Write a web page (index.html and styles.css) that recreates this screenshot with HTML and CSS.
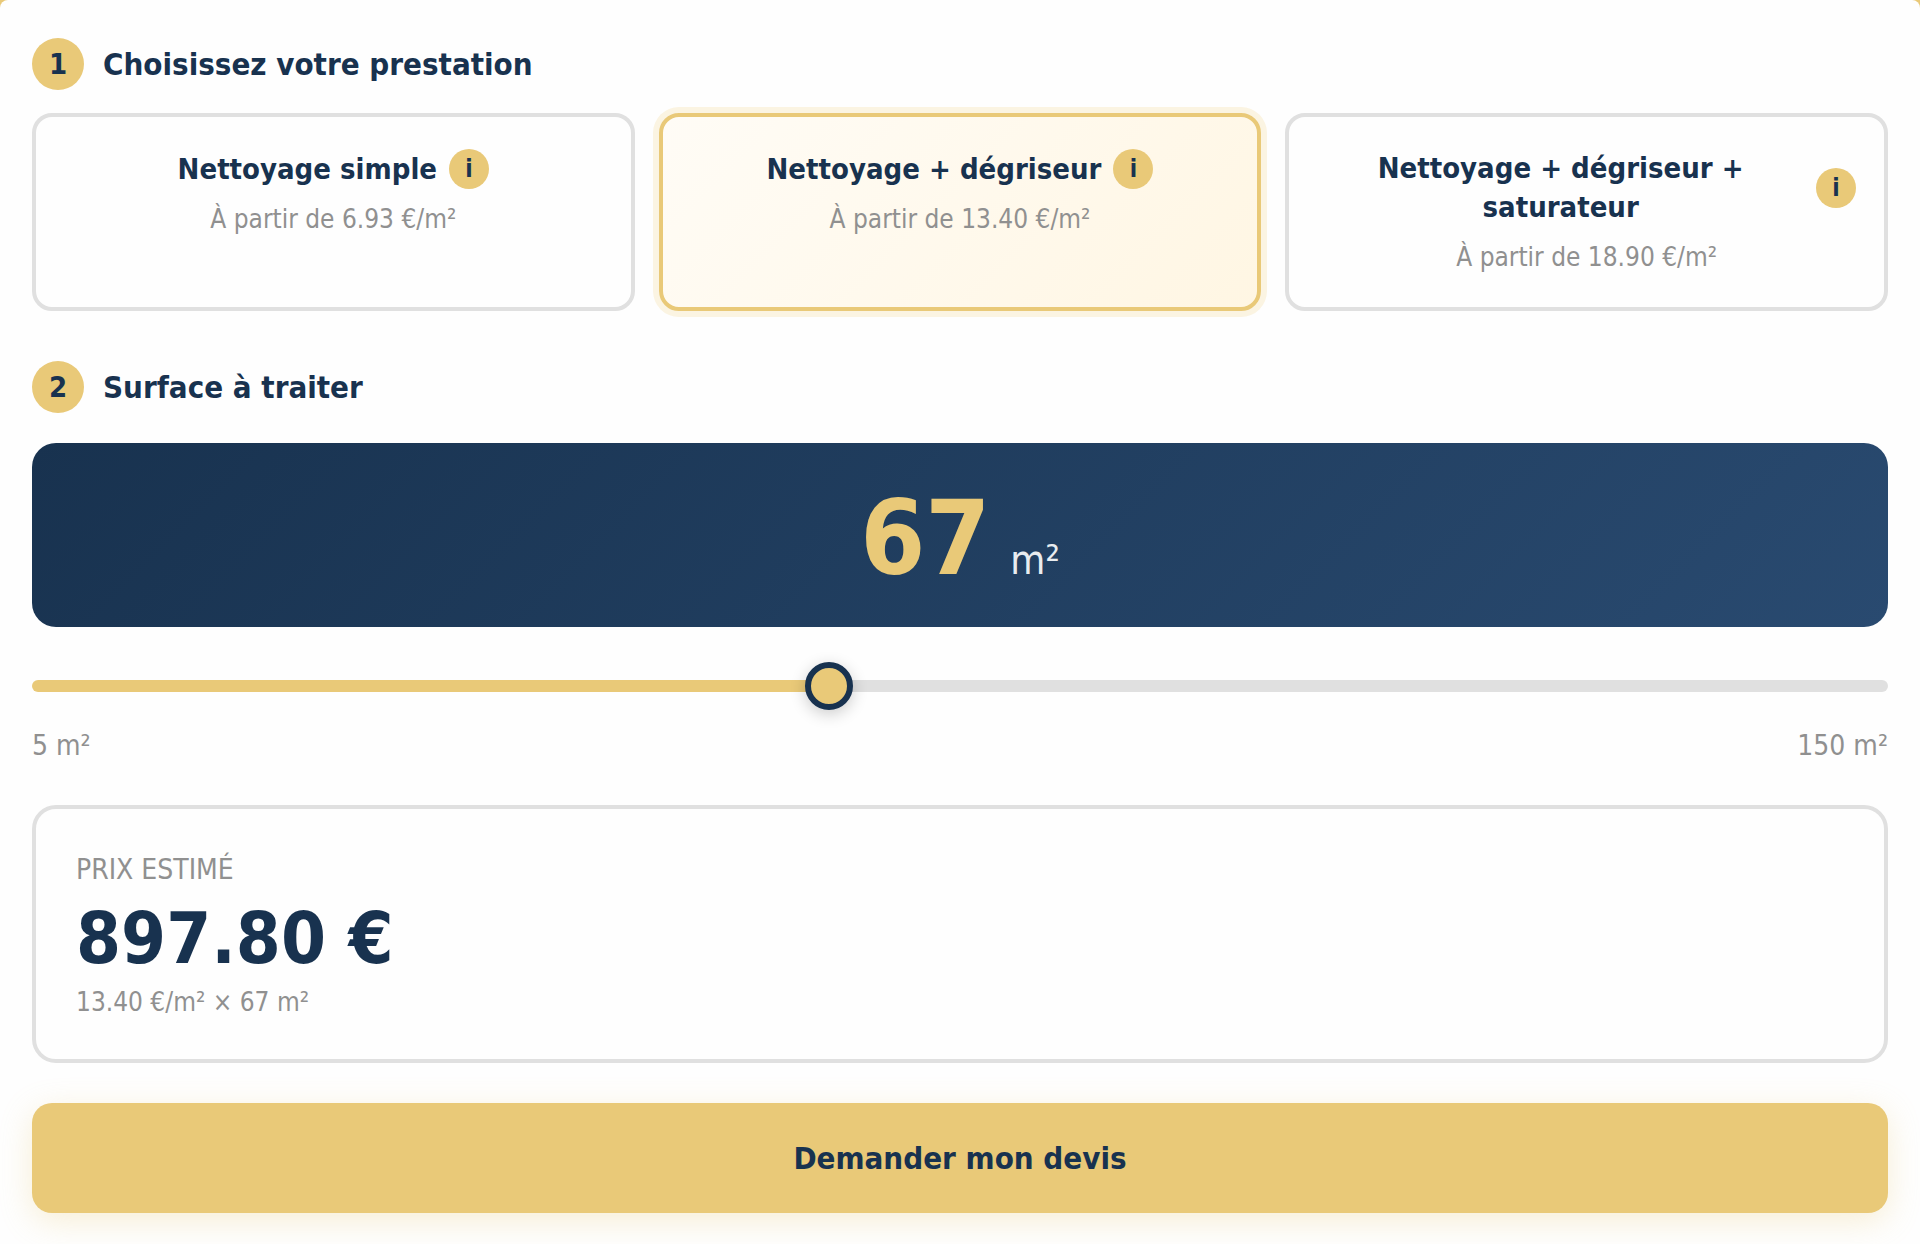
FILE: index.html
```
<!doctype html>
<html lang="fr">
<head>
    <meta charset="UTF-8" />
    <meta name="viewport" content="width=device-width, initial-scale=1.0" />
    <title>Estimation de devis</title>
    <link rel="stylesheet" href="styles.css">
</head>
<body>
    <main class="calculator">
        <section class="step">
            <h2 class="step-title"><span class="step-number">1</span>Choisissez votre prestation</h2>

            <div class="services">
                <div class="service-card">
                    <input type="radio" name="service" id="service-simple" class="service-radio" value="6.93" />
                    <div class="service-header">
                        <label for="service-simple" class="service-name">Nettoyage simple</label>
                        <button type="button" class="info-btn" aria-label="Informations nettoyage simple">i</button>
                    </div>
                    <p class="service-price">À partir de 6.93 €/m²</p>
                </div>
                <div class="service-card">
                    <input type="radio" name="service" id="service-degriseur" class="service-radio" value="13.40" checked />
                    <div class="service-header">
                        <label for="service-degriseur" class="service-name">Nettoyage + dégriseur</label>
                        <button type="button" class="info-btn" aria-label="Informations dégriseur">i</button>
                    </div>
                    <p class="service-price">À partir de 13.40 €/m²</p>
                </div>
                <div class="service-card">
                    <input type="radio" name="service" id="service-saturateur" class="service-radio" value="18.90" />
                    <div class="service-header">
                        <label for="service-saturateur" class="service-name">Nettoyage + dégriseur + saturateur</label>
                        <button type="button" class="info-btn" aria-label="Informations saturateur">i</button>
                    </div>
                    <p class="service-price">À partir de 18.90 €/m²</p>
                </div>
            </div>
        </section>

        <section class="step">
            <h2 class="step-title"><span class="step-number">2</span><label for="surface">Surface à traiter</label></h2>

            <div class="surface-display">
                <span class="surface-value" id="surfaceValue">67</span>
                <span class="surface-unit">m²</span>
            </div>

            <input type="range" id="surface" class="surface-slider" min="5" max="150" value="67" style="--fill: 42.76%;" />
            <div class="slider-labels">
                <span>5 m²</span>
                <span>150 m²</span>
            </div>
        </section>

        <section class="price-card">
            <p class="price-label">Prix estimé</p>
            <p class="price-total" id="priceTotal">897.80 €</p>
            <p class="price-detail" id="priceDetail">13.40 €/m² × 67 m²</p>
        </section>

        <button type="button" class="quote-btn">Demander mon devis</button>
    </main>

    <script>
        const slider = document.getElementById("surface");
        const radios = document.querySelectorAll(".service-radio");

        function updatePrice() {
            const rate = parseFloat(document.querySelector(".service-radio:checked").value);
            const surface = Number(slider.value);
            const fill = (surface - slider.min) / (slider.max - slider.min) * 100;

            slider.style.setProperty("--fill", fill.toFixed(2) + "%");
            document.getElementById("surfaceValue").textContent = surface;
            document.getElementById("priceTotal").textContent = (rate * surface).toFixed(2) + " €";
            document.getElementById("priceDetail").textContent = rate.toFixed(2) + " €/m² × " + surface + " m²";
        }

        slider.addEventListener("input", updatePrice);
        radios.forEach(radio => radio.addEventListener("change", updatePrice));
    </script>
</body>
</html>
```
FILE: styles.css
```
* {
    box-sizing: border-box;
}

body {
    margin: 0;
    background-color: #e9c978;
    color: #18324f;
    font-family: "DejaVu Sans Condensed", "Noto Sans", sans-serif;
}

p {
    margin: 0;
}

button {
    font-family: inherit;
    color: inherit;
    border: none;
    padding: 0;
    cursor: pointer;
}

.calculator {
    background-color: #fefefe;
    border-radius: 8px 8px 0 0;
    padding: 38px 32px 30px;
    min-height: 100vh;
}

/* Steps */
.step-title {
    display: flex;
    align-items: center;
    gap: 19px;
    margin: 0 0 23px;
    font-size: 31px;
    line-height: 40px;
    font-weight: 700;
}

.step-number {
    display: flex;
    align-items: center;
    justify-content: center;
    width: 52px;
    height: 52px;
    border-radius: 50%;
    background-color: #e9c978;
    font-size: 29px;
}

/* Services */
.services {
    display: grid;
    grid-template-columns: repeat(3, 1fr);
    gap: 24px;
    margin-bottom: 50px;
}

.service-card {
    position: relative;
    border: 4px solid #e0e0e0;
    border-radius: 20px;
    padding: 32px 28px;
    text-align: center;
}

.service-card:has(.service-radio:checked) {
    border-color: #e9c978;
    background: linear-gradient(135deg, #fffcf6 0%, #fff6e3 100%);
    box-shadow: 0 0 0 6px #fbf4e2;
}

.service-radio {
    position: absolute;
    inset: 0;
    width: 100%;
    height: 100%;
    margin: 0;
    opacity: 0;
    cursor: pointer;
}

.service-header {
    display: flex;
    align-items: center;
    justify-content: center;
    gap: 12px;
    margin-bottom: 12px;
}

.service-name {
    font-size: 29px;
    line-height: 39px;
    font-weight: 700;
}

.info-btn {
    position: relative;
    flex-shrink: 0;
    width: 40px;
    height: 40px;
    border-radius: 50%;
    background-color: #e9c978;
    font-size: 24px;
    font-weight: 700;
}

.service-price {
    font-size: 26px;
    line-height: 36px;
    color: #909090;
}

/* Surface */
.surface-display {
    display: flex;
    align-items: baseline;
    justify-content: center;
    gap: 20px;
    margin-top: 30px;
    padding: 35px 32px 29px;
    border-radius: 24px;
    background: linear-gradient(135deg, #18324f 0%, #294a70 100%);
}

.surface-value {
    font-size: 104px;
    line-height: 120px;
    font-weight: 700;
    color: #e9c978;
}

.surface-unit {
    font-size: 40px;
    color: #e9ecef;
}

.surface-slider {
    -webkit-appearance: none;
    appearance: none;
    display: block;
    width: 100%;
    height: 48px;
    margin: 35px 0 14px;
    background: transparent;
    cursor: pointer;
}

.surface-slider::-webkit-slider-runnable-track {
    height: 12px;
    border-radius: 6px;
    background: linear-gradient(to right, #e9c978 var(--fill), #e0e0e0 var(--fill));
}

.surface-slider::-webkit-slider-thumb {
    -webkit-appearance: none;
    width: 48px;
    height: 48px;
    margin-top: -18px;
    border: 6px solid #18324f;
    border-radius: 50%;
    background-color: #e9c978;
    box-shadow: 0 4px 16px rgba(0, 0, 0, 0.2);
}

.slider-labels {
    display: flex;
    justify-content: space-between;
    font-size: 28px;
    line-height: 44px;
    color: #909090;
}

/* Price */
.price-card {
    margin: 37px 0 40px;
    padding: 40px;
    border: 4px solid #e0e0e0;
    border-radius: 24px;
}

.price-label {
    font-size: 28px;
    line-height: 42px;
    text-transform: uppercase;
    color: #909090;
}

.price-total {
    font-size: 72px;
    line-height: 94px;
    font-weight: 700;
}

.price-detail {
    font-size: 26px;
    line-height: 34px;
    color: #909090;
}

.quote-btn {
    display: block;
    width: 100%;
    padding: 35px;
    border-radius: 20px;
    background-color: #e9c978;
    box-shadow: 0 8px 32px rgba(233, 201, 120, 0.3);
    font-size: 31px;
    line-height: 40px;
    font-weight: 700;
}

@media (max-width: 900px) {
    .services {
        grid-template-columns: 1fr;
    }
}
```
